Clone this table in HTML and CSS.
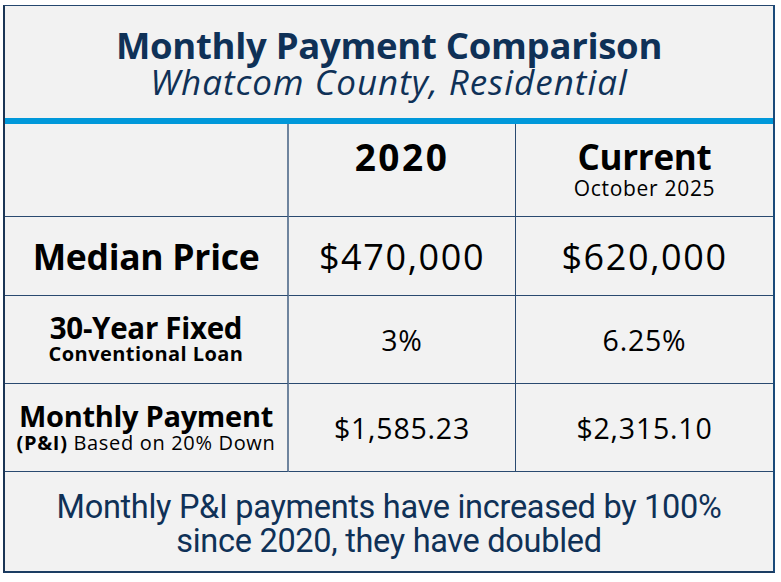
FILE: index.html
```html
<!DOCTYPE html>
<html>
<head>
<meta charset="utf-8">
<link rel="stylesheet" href="styles.css">
</head>
<body>
<div class="card">
  <div class="title">
    <div class="t1">Monthly Payment Comparison</div>
    <div class="t2">Whatcom County, Residential</div>
  </div>
  <div class="bar"></div>
  <div class="grid">
    <div class="cell c1 hdr"></div>
    <div class="cell c2 hdr"><div class="year yr">2020</div></div>
    <div class="cell c3 hdr"><div class="year">Current</div><div class="sub">October 2025</div></div>

    <div class="cell c1 r1"><div class="lbl-big">Median Price</div></div>
    <div class="cell c2 r1"><div class="val-big">$470,000</div></div>
    <div class="cell c3 r1"><div class="val-big">$620,000</div></div>

    <div class="cell c1 r2"><div class="lbl-mid">30-Year Fixed</div><div class="lbl-small">Conventional Loan</div></div>
    <div class="cell c2 r2"><div class="val">3%</div></div>
    <div class="cell c3 r2"><div class="val">6.25%</div></div>

    <div class="cell c1 r3"><div class="lbl-mid2">Monthly Payment</div><div class="lbl-note"><b>(P&amp;I)</b> Based on 20% Down</div></div>
    <div class="cell c2 r3"><div class="val">$1,585.23</div></div>
    <div class="cell c3 r3"><div class="val">$2,315.10</div></div>
  </div>
  <div class="foot">Monthly P&amp;I payments have increased by 100%<br>since 2020, they have doubled</div>
</div>
</body>
</html>
```
FILE: styles.css
```css
html, body { margin: 0; padding: 0; background: #ffffff; }
body { font-family: "Open Sans", Lato, sans-serif; }
.card {
  margin: 5px 0 0 3px;
  width: 772px;
  height: 568px;
  box-sizing: border-box;
  border: 1px solid #24466e;
  border-left: 2px solid #1b3555;
  border-right: 2px solid #1b4a7a;
  border-bottom: 2px solid #1b3d63;
  background: #f2f2f2;
  display: flex;
  flex-direction: column;
}
.title {
  height: 112px;
  display: flex;
  flex-direction: column;
  align-items: center;
  justify-content: center;
  color: #0f3157;
  padding-top: 2px;
  box-sizing: border-box;
}
.t1 { font-weight: 700; font-size: 36.5px; line-height: 38px; letter-spacing: -0.3px; }
.t2 { font-style: italic; font-size: 35px; line-height: 36px; letter-spacing: 1px; }
.bar { height: 6px; background: #0098da; }
.grid {
  display: grid;
  grid-template-columns: 284px 227px 1fr;
  grid-template-rows: 93px 79px 88px 88px;
}
.cell {
  display: flex;
  flex-direction: column;
  align-items: center;
  justify-content: center;
  border-bottom: 1px solid #2a4a70;
  color: #000;
  text-align: center;
  white-space: nowrap;
}
.c1 { border-right: 2px solid #6f849e; }
.c2 { border-right: 1px solid #2a4a70; }
.hdr { justify-content: flex-start; padding-top: 14px; box-sizing: border-box; }
.year { font-weight: 700; font-size: 35px; line-height: 38px; letter-spacing: -0.3px; }
.yr { font-size: 37px; letter-spacing: 2.5px; }
.sub { font-size: 21px; line-height: 24px; letter-spacing: 0.7px; }
.lbl-big { font-weight: 700; font-size: 35.5px; letter-spacing: -0.3px; }
.val-big { font-size: 36px; letter-spacing: 1.6px; }
.lbl-mid { font-weight: 700; font-size: 29.5px; line-height: 29px; letter-spacing: -0.3px; }
.lbl-small { font-weight: 700; font-size: 20px; line-height: 24px; letter-spacing: 0.45px; }
.lbl-mid2 { font-weight: 700; font-size: 29px; line-height: 30px; letter-spacing: -0.3px; }
.lbl-note { font-size: 20px; line-height: 24px; letter-spacing: 0.67px; }
.lbl-note b { font-weight: 700; }
.val { font-size: 28.5px; letter-spacing: 0.8px; }
.foot {
  flex: 1;
  display: flex;
  align-items: center;
  justify-content: center;
  text-align: center;
  color: #0f3157;
  font-family: Roboto, "Liberation Sans Narrow", sans-serif;
  font-size: 32.5px;
  line-height: 34px;
  padding-top: 4px;
  letter-spacing: -0.3px;
}
```
